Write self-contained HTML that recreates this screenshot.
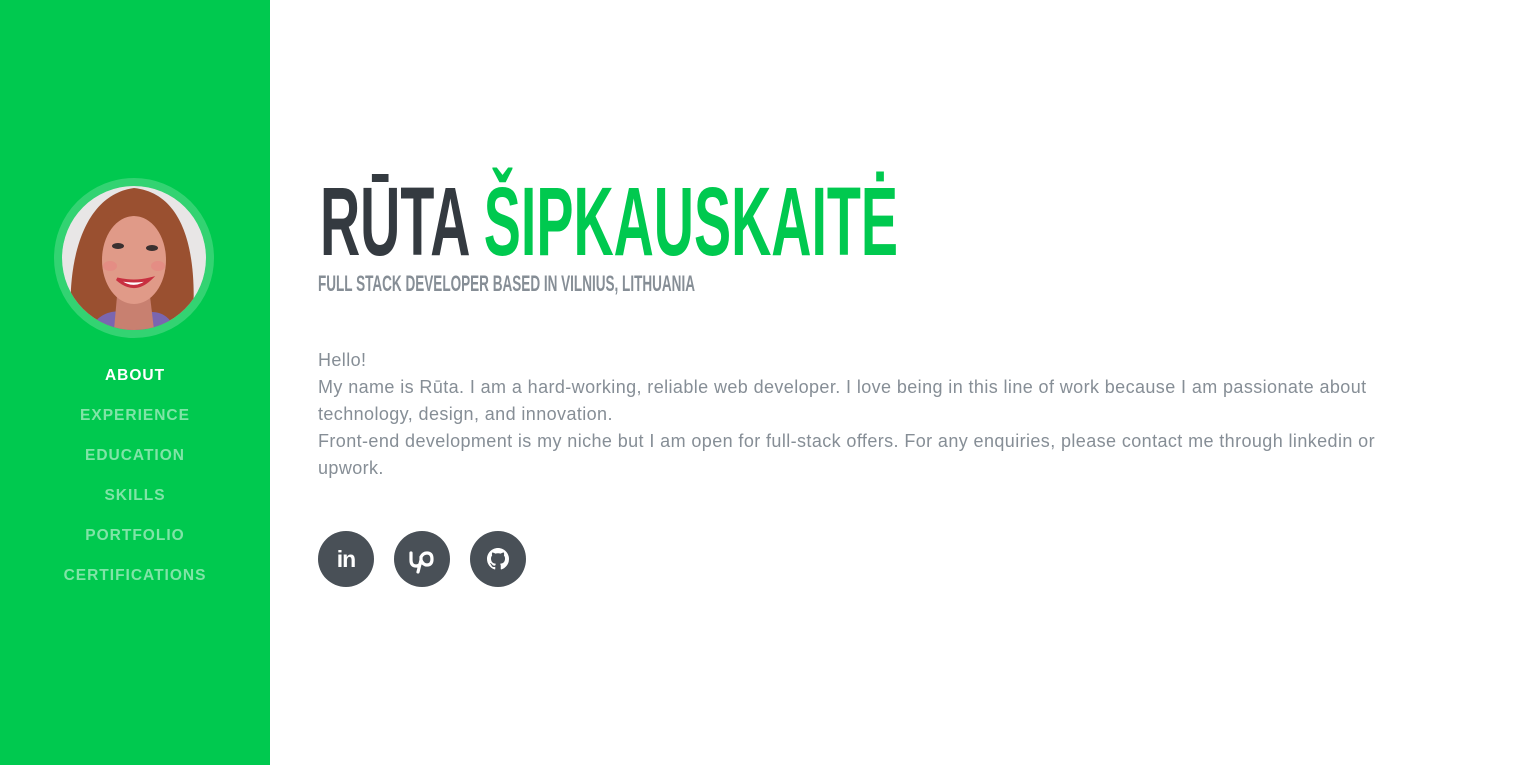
<!DOCTYPE html>
<html><head><meta charset="utf-8"><style>
*{margin:0;padding:0;box-sizing:border-box}
body{width:1515px;height:765px;overflow:hidden;background:#fff;font-family:"Liberation Sans",sans-serif;position:relative}
#side{position:absolute;left:0;top:0;width:270px;height:765px;background:#00c94f}
#photo{position:absolute;left:54px;top:178px;width:160px;height:160px;border-radius:50%;border:8px solid rgba(255,255,255,.2);overflow:hidden}
#nav{position:absolute;left:0;top:365px;width:270px;text-align:center}
#nav div{height:40px;line-height:22px;font-size:15.5px;font-weight:bold;letter-spacing:1px;color:rgba(255,255,255,.5)}
#nav div.a{color:#fff}
#body{position:absolute;left:318px;top:347px;width:1075px;font-size:18px;line-height:27px;color:#868e96;letter-spacing:0.4px}
.ic{position:absolute;top:531px;width:56px;height:56px;border-radius:50%;background:#495057;color:#fff;text-align:center}
</style></head><body>
<div id="side">
<div id="photo"><svg width="144" height="144" viewBox="0 0 144 144">
<rect width="144" height="144" fill="#e8e6e6"/>
<path d="M10 144 C4 90 15 10 72 2 C128 8 136 80 130 144Z" fill="#9a5030"/>
<path d="M28 144 C35 128 50 124 60 126 L90 126 C100 126 110 132 112 144Z" fill="#7a66b0"/>
<path d="M55 110 L88 110 L92 144 L52 144Z" fill="#c88070"/>
<ellipse cx="72" cy="74" rx="32" ry="44" fill="#e09a88"/>
<path d="M38 60 C40 30 55 20 72 22 C90 22 104 35 106 60 C98 38 86 30 72 30 C58 30 46 40 38 60Z" fill="#9a5030"/>
<ellipse cx="56" cy="60" rx="6" ry="3" fill="#3a3030"/><ellipse cx="90" cy="62" rx="6" ry="3" fill="#3a3030"/>
<ellipse cx="48" cy="80" rx="7" ry="5" fill="#e88080" opacity=".5"/><ellipse cx="96" cy="80" rx="7" ry="5" fill="#e88080" opacity=".5"/>
<path d="M55 93 Q72 108 88 93 Q72 97 55 93Z" fill="#fff" stroke="#c83040" stroke-width="3"/>
</svg></div>
<div id="nav"><div class="a">ABOUT</div><div>EXPERIENCE</div><div>EDUCATION</div><div>SKILLS</div><div>PORTFOLIO</div><div>CERTIFICATIONS</div></div>
</div>
<svg style="position:absolute;left:0;top:0" width="1515" height="300">
<text x="320" y="255" font-family="Liberation Sans" font-weight="bold" font-size="97" textLength="578" lengthAdjust="spacingAndGlyphs"><tspan fill="#343a40">RŪTA </tspan><tspan fill="#00c94f">ŠIPKAUSKAITĖ</tspan></text>
<text x="318" y="291" font-family="Liberation Sans" font-weight="bold" font-size="22" fill="#868e96" textLength="377" lengthAdjust="spacingAndGlyphs">FULL STACK DEVELOPER BASED IN VILNIUS, LITHUANIA</text>
</svg>
<div id="body">Hello!<br>My name is Rūta. I am a hard-working, reliable web developer. I love being in this line of work because I am passionate about technology, design, and innovation.<br>Front-end development is my niche but I am open for full-stack offers. For any enquiries, please contact me through linkedin or upwork.</div>
<div class="ic" style="left:318px"><span style="font-size:23px;font-weight:bold;line-height:56px;letter-spacing:-1px">in</span></div>
<div class="ic" style="left:394px"><svg width="56" height="56" viewBox="0 0 56 56" fill="none" stroke="#fff" stroke-width="3.2" stroke-linecap="round"><path d="M17 22 V29 Q17 35 22 35 Q27 35 27 29 V26 Q29 22 33 22 Q38 22 38 28 Q38 34 33 34 Q29 34 27 29 M27 29 L24 41"/></svg></div>
<div class="ic" style="left:470px"><svg width="56" height="56" viewBox="0 0 56 56"><g transform="translate(17 17) scale(1.375)"><path fill="#fff" d="M8 0C3.58 0 0 3.58 0 8c0 3.540 2.290 6.530 5.470 7.590.4.07.55-.17.55-.38 0-.19-.01-.82-.01-1.490-2.010.37-2.530-.49-2.690-.94-.09-.23-.48-.94-.82-1.130-.28-.15-.68-.52-.01-.53.63-.01 1.080.58 1.230.82.72 1.210 1.870.87 2.330.66.07-.52.28-.87.51-1.070-1.780-.2-3.640-.89-3.640-3.950 0-.87.31-1.590.82-2.150-.08-.2-.36-1.020.08-2.120 0 0 .67-.21 2.200.82.64-.18 1.320-.27 2-.27.68 0 1.360.09 2 .27 1.530-1.040 2.200-.82 2.200-.82.44 1.100.16 1.920.08 2.120.51.56.82 1.270.82 2.150 0 3.070-1.870 3.750-3.650 3.950.29.25.54.73.54 1.480 0 1.070-.01 1.930-.01 2.200 0 .21.15.46.55.38A8.013 8.013 0 0016 8c0-4.420-3.580-8-8-8z"/></g></svg></div>
</body></html>
